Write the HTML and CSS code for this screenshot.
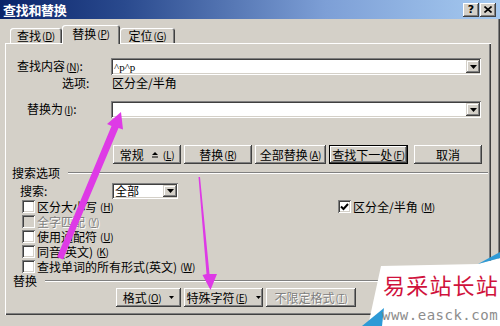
FILE: index.html
```html
<!DOCTYPE html>
<html lang="zh">
<head>
<meta charset="utf-8">
<title>查找和替换</title>
<link rel="stylesheet" href="styles.css">
</head>
<body>
<div class="dialog">
  <div class="titlebar">
    <span class="title">查找和替换</span>
    <div class="tbtns">
      <span class="tbtn">?</span>
      <span class="tbtn"><svg width="8" height="7" viewBox="0 0 8 7"><path d="M0.5 0.5 L7.5 6.5 M7.5 0.5 L0.5 6.5" stroke="#000" stroke-width="1.6"/></svg></span>
    </div>
  </div>

  <div class="tabs">
    <div class="tab t1">查找<span class="ak">(<u>D</u>)</span></div>
    <div class="tab t2 active">替换<span class="ak">(<u>P</u>)</span></div>
    <div class="tab t3">定位<span class="ak">(<u>G</u>)</span></div>
  </div>

  <div class="panel">
    <div class="field">
      <span class="lbl l-find">查找内容<span class="ak">(<u>N</u>)</span>:</span>
      <div class="combo"><span class="val">^p^p</span><span class="drop"><svg width="7" height="4" viewBox="0 0 7 4"><path d="M0 0H7L3.5 4Z" fill="#000"/></svg></span></div>
    </div>
    <div class="field opt">
      <span class="lbl l-opt">选项:</span>
      <span class="optval">区分全/半角</span>
    </div>
    <div class="field repl">
      <span class="lbl l-repl">替换为<span class="ak">(<u>I</u>)</span>:</span>
      <div class="combo"><span class="val"></span><span class="drop"><svg width="7" height="4" viewBox="0 0 7 4"><path d="M0 0H7L3.5 4Z" fill="#000"/></svg></span></div>
    </div>

    <div class="btnrow main">
      <span class="btn w68">常规<svg class="less" width="6" height="6" viewBox="0 0 6 6"><path d="M3 0L6 3H0Z" fill="#000"/><rect x="0" y="4.5" width="6" height="1" fill="#000"/></svg><span class="ak">(<u>L</u>)</span></span>
      <span class="btn w68">替换<span class="ak">(<u>R</u>)</span></span>
      <span class="btn w71">全部替换<span class="ak">(<u>A</u>)</span></span>
      <span class="btn w79 default">查找下一处<span class="ak">(<u>F</u>)</span></span>
      <span class="btn w68 cancel">取消</span>
    </div>

    <div class="group g-search"><span>搜索选项</span><i class="rule"></i></div>

    <div class="search">
      <span class="lbl l-search">搜索:</span>
      <div class="combo small"><span class="val">全部</span><span class="drop"><svg width="7" height="4" viewBox="0 0 7 4"><path d="M0 0H7L3.5 4Z" fill="#000"/></svg></span></div>
    </div>

    <div class="opts">
      <div class="col">
        <div class="cb"><span class="box"></span>区分大小写<span class="ak">(<u>H</u>)</span></div>
        <div class="cb disabled"><span class="box"></span>全字匹配<span class="ak">(<u>Y</u>)</span></div>
        <div class="cb"><span class="box"></span>使用通配符<span class="ak">(<u>U</u>)</span></div>
        <div class="cb"><span class="box"></span>同音(英文)<span class="ak">(<u>K</u>)</span></div>
        <div class="cb"><span class="box"></span>查找单词的所有形式(英文)<span class="ak">(<u>W</u>)</span></div>
      </div>
      <div class="col">
        <div class="cb"><span class="box"><svg width="9" height="8" viewBox="0 0 9 8"><path d="M1 3.5L3.5 6L8 1" stroke="#000" stroke-width="2" fill="none"/></svg></span>区分全/半角<span class="ak">(<u>M</u>)</span></div>
      </div>
    </div>

    <div class="group g-repl"><span>替换</span><i class="rule"></i></div>

    <div class="btnrow bottom">
      <span class="btn w65">格式<span class="ak">(<u>O</u>)</span><svg class="dd" width="5" height="3" viewBox="0 0 5 3"><path d="M0 0H5L2.5 3Z" fill="#000"/></svg></span>
      <span class="btn w79">特殊字符<span class="ak">(<u>E</u>)</span><svg class="dd" width="5" height="3" viewBox="0 0 5 3"><path d="M0 0H5L2.5 3Z" fill="#000"/></svg></span>
      <span class="btn w90 off">不限定格式<span class="ak">(<u>T</u>)</span></span>
    </div>
  </div>
</div>

<svg class="arrows" width="500" height="326" viewBox="0 0 500 326">
  <polygon points="57,257 111.5,126 107,124 121,112 123,129.5 118.5,128 63,259.5" fill="#de3ae6"/>
  <polygon points="198.5,177 200,177 209.5,274 217,274 210.5,290 202.5,275 206.5,274" fill="#de3ae6"/>
</svg>

<div class="wm">
  <svg class="wm-bg" width="140" height="76" viewBox="0 0 140 76">
    <polygon points="21,16 118,14 140,8 140,76 8,76" fill="#fff"/>
    <polygon points="118,14 140,2 140,8" fill="#2d9ad6"/>
    <polygon points="2,76 24,58 22,76" fill="#2d9ad6"/>
  </svg>
  <div class="wm-cn">易采站长站</div>
  <div class="wm-en">www.easck.com</div>
</div>
</body>
</html>
```

FILE: styles.css
```css
* { box-sizing: border-box; }

body {
  margin: 0;
  width: 500px;
  height: 326px;
  overflow: hidden;
  position: relative;
  background: #d4d0c8;
  color: #000;
  font-family: "Noto Sans CJK SC", "Noto Sans", sans-serif;
  font-size: 12px;
  line-height: 14px;
}

u { text-decoration: underline; }
.ak { font-size: 10px; letter-spacing: -0.2px; margin-left: 1px; }

.dialog {
  height: 326px;
  box-shadow: inset -1px 0 #404040, inset -2px 0 #808080;
}

/* title bar */
.titlebar {
  height: 19px;
  display: flex;
  align-items: center;
  justify-content: space-between;
  padding: 0 4px 0 3px;
  background: linear-gradient(90deg, #0a246a 0%, #2a4a8e 25%, #7d9fd6 65%, #a6caf0 100%);
}
.title {
  color: #fff;
  font-weight: bold;
  font-size: 13px;
  line-height: 15px;
  letter-spacing: -0.3px;
}
.tbtns { display: flex; gap: 1px; }
.tbtn {
  width: 16px;
  height: 14px;
  display: flex;
  align-items: center;
  justify-content: center;
  background: #d4d0c8;
  box-shadow: inset -1px -1px #404040, inset 1px 1px #fff, inset -2px -2px #808080;
  font: bold 11px/1 "DejaVu Sans", sans-serif;
}

/* tabs */
.tabs {
  display: flex;
  align-items: flex-end;
  height: 24px;
  padding-left: 10px;
}
.tab {
  height: 15px;
  display: flex;
  align-items: center;
  justify-content: center;
  background: #d4d0c8;
  border-radius: 3px 3px 0 0;
  box-shadow: inset 1px 1px #fff, inset -1px 0 #404040, inset -2px 0 #808080;
  white-space: nowrap;
}
.t1 { width: 52px; }
.t2 { width: 58px; }
.t3 { width: 55px; }
.tab.active {
  height: 19px;
  margin-bottom: -1px;
  padding-bottom: 2px;
  position: relative;
  z-index: 1;
}

/* panel */
.panel {
  margin-left: 5px;
  width: 486px;
  height: 272px;
  padding-top: 15px;
  box-shadow: inset 1px 1px #fff, inset -1px -1px #404040, inset -2px -2px #808080;
}

.field {
  display: grid;
  grid-template-columns: 106px 370px;
  align-items: center;
  height: 17px;
}
.field.opt { height: 14px; margin-top: 1px; }
.field.repl { margin-top: 11px; }

.lbl { white-space: nowrap; }
.l-find { padding-left: 12px; }
.l-opt { padding-left: 57px; }
.l-repl { padding-left: 22px; }
.optval { padding-left: 1px; }

.combo {
  height: 17px;
  display: flex;
  align-items: center;
  justify-content: space-between;
  padding: 2px 1px 2px 2px;
  background: #fff;
  box-shadow: inset 1px 1px #808080, inset -1px -1px #fff, inset 2px 2px #404040, inset -2px -2px #d4d0c8;
}
.combo .val {
  font-family: "Liberation Serif", serif;
  font-size: 11px;
  padding-left: 1px;
}
.combo.small { width: 66px; height: 16px; }
.combo.small .val {
  font-family: "Noto Sans CJK SC", sans-serif;
  font-size: 12px;
}
.drop {
  width: 14px;
  height: 13px;
  display: flex;
  align-items: center;
  justify-content: center;
  background: #d4d0c8;
  box-shadow: inset -1px -1px #404040, inset 1px 1px #d4d0c8, inset -2px -2px #808080, inset 2px 2px #fff;
}
.combo.small .drop { height: 12px; }

/* buttons */
.btnrow {
  display: flex;
  gap: 3px;
  height: 19px;
}
.btnrow.main { margin-top: 27px; padding-left: 108px; }
.btnrow.bottom { margin-top: 1px; padding-left: 111px; }

.btn {
  height: 19px;
  display: flex;
  align-items: center;
  justify-content: center;
  background: #d4d0c8;
  white-space: nowrap;
  box-shadow: inset -1px -1px #404040, inset 1px 1px #fff, inset -2px -2px #808080;
}
.btn.default {
  box-shadow: inset 0 0 0 1px #000, inset -2px -2px #404040, inset 2px 2px #fff, inset -3px -3px #808080;
}
.btn.cancel { margin-left: 3px; }
.btn.off { color: #808080; text-shadow: 1px 1px #fff; }
.w65 { width: 65px; }
.w68 { width: 68px; }
.w71 { width: 71px; }
.w79 { width: 79px; }
.w90 { width: 90px; }
.less { margin: 0 4px 0 8px; }
.dd { margin-left: 8px; }

/* group headers */
.group {
  display: flex;
  align-items: center;
  gap: 8px;
  height: 15px;
  margin-top: 1px;
  padding: 0 3px 0 7px;
  white-space: nowrap;
}
.group.g-repl { height: 13px; margin-top: 0; padding-left: 8px; }
.rule {
  flex: 1;
  height: 2px;
  border-top: 1px solid #808080;
  border-bottom: 1px solid #fff;
}

.search {
  display: grid;
  grid-template-columns: 107px 66px;
  align-items: center;
  height: 16px;
  margin-top: 3px;
}
.l-search { padding-left: 15px; }

.opts {
  display: grid;
  grid-template-columns: 316px auto;
  padding-left: 17px;
}
.cb {
  display: flex;
  align-items: center;
  gap: 2px;
  height: 15px;
  white-space: nowrap;
}
.box {
  width: 13px;
  height: 13px;
  flex: none;
  display: flex;
  align-items: center;
  justify-content: center;
  background: #fff;
  box-shadow: inset 1px 1px #808080, inset -1px -1px #fff, inset 2px 2px #404040, inset -2px -2px #d4d0c8;
}
.cb.disabled { color: #808080; text-shadow: 1px 1px #fff; }
.cb.disabled .box { background: #d4d0c8; }

/* overlays */
.arrows {
  position: absolute;
  left: 0;
  top: 0;
  pointer-events: none;
}

.wm {
  position: absolute;
  left: 360px;
  top: 250px;
  width: 140px;
  height: 76px;
}
.wm-bg { position: absolute; left: 0; top: 0; }
.wm-cn {
  position: absolute;
  left: 23px;
  top: 20px;
  font-size: 22px;
  line-height: 28px;
  letter-spacing: 1.2px;
  color: #d0123c;
  white-space: nowrap;
}
.wm-en {
  position: absolute;
  left: 22px;
  top: 57px;
  font-family: "DejaVu Sans Mono", monospace;
  font-size: 14px;
  line-height: 16px;
  letter-spacing: 0.5px;
  color: #8c8c8c;
  white-space: nowrap;
}
```
